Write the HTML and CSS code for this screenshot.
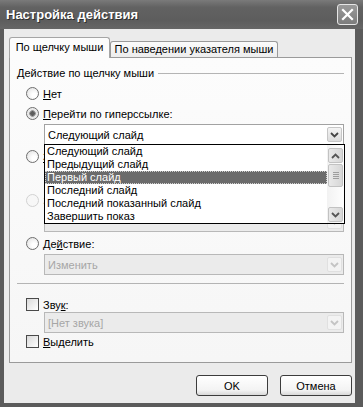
FILE: index.html
```html
<!DOCTYPE html>
<html lang="ru">
<head>
    <meta charset="UTF-8">
    <title>Настройка действия</title>
    <link rel="stylesheet" href="styles.css">
</head>
<body>
    <div class="window">
        <div class="titlebar">
            <span class="title">Настройка действия</span>
            <span class="close">
                <svg width="13" height="13" viewBox="0 0 13 13"><path d="M2 2 L11 11 M11 2 L2 11" stroke="#fff" stroke-width="2.2" stroke-linecap="square"/></svg>
            </span>
        </div>
        <div class="frame">
            <div class="tabs">
                <div class="tab active">По щелчку мыши</div>
                <div class="tab">По наведении указателя мыши</div>
            </div>
            <div class="panel">
                <div class="group-head"><span>Действие по щелчку мыши</span></div>

                <div class="opt"><span class="radio"></span><span><u>Н</u>ет</span></div>
                <div class="opt"><span class="radio checked"></span><span><u>П</u>ерейти по гиперссылке:</span></div>
                <div class="combo-wrap">
                    <div class="combo">
                        <span>Следующий слайд</span>
                        <span class="drop-btn"><svg width="9" height="6" viewBox="0 0 9 6"><path d="M1 1 L4.5 4.5 L8 1" fill="none" stroke="#444" stroke-width="1.8"/></svg></span>
                    </div>
                    <div class="listbox">
                        <ul class="items">
                            <li>Следующий слайд</li>
                            <li>Предыдущий слайд</li>
                            <li class="selected">Первый слайд</li>
                            <li>Последний слайд</li>
                            <li>Последний показанный слайд</li>
                            <li>Завершить показ</li>
                        </ul>
                        <div class="scrollbar">
                            <span class="sb-btn"><svg width="9" height="6" viewBox="0 0 9 6"><path d="M1 5 L4.5 1.5 L8 5" fill="none" stroke="#555" stroke-width="1.8"/></svg></span>
                            <span class="sb-thumb"><i></i><i></i><i></i><i></i></span>
                            <span class="sb-track"></span>
                            <span class="sb-btn"><svg width="9" height="6" viewBox="0 0 9 6"><path d="M1 1 L4.5 4.5 L8 1" fill="none" stroke="#555" stroke-width="1.8"/></svg></span>
                        </div>
                    </div>
                </div>

                <div class="opt row3"><span class="radio"></span><span><u>З</u>апуск программы:</span></div>
                <div class="combo field"></div>

                <div class="opt row4 disabled"><span class="radio"></span><span>Запуск макроса:</span></div>
                <div class="combo disabled">
                    <span></span>
                    <span class="drop-btn"><svg width="9" height="6" viewBox="0 0 9 6"><path d="M1 1 L4.5 4.5 L8 1" fill="none" stroke="#c4c4c4" stroke-width="1.8"/></svg></span>
                </div>

                <div class="opt row5"><span class="radio"></span><span>Де<u>й</u>ствие:</span></div>
                <div class="combo disabled">
                    <span>Изменить</span>
                    <span class="drop-btn"><svg width="9" height="6" viewBox="0 0 9 6"><path d="M1 1 L4.5 4.5 L8 1" fill="none" stroke="#c4c4c4" stroke-width="1.8"/></svg></span>
                </div>

                <div class="sep"></div>

                <div class="opt check-sound"><span class="checkbox"></span><span>Зву<u>к</u>:</span></div>
                <div class="combo disabled sound">
                    <span>[Нет звука]</span>
                    <span class="drop-btn"><svg width="9" height="6" viewBox="0 0 9 6"><path d="M1 1 L4.5 4.5 L8 1" fill="none" stroke="#c4c4c4" stroke-width="1.8"/></svg></span>
                </div>
                <div class="opt check-hl"><span class="checkbox"></span><span><u>В</u>ыделить</span></div>
            </div>
            <div class="buttons">
                <button>OK</button>
                <button>Отмена</button>
            </div>
        </div>
    </div>
</body>
</html>
```

FILE: styles.css
```css
body {
    margin: 0;
    font-family: "Liberation Sans", Tahoma, sans-serif;
    font-size: 11px;
    color: #000;
}
.window {
    width: 363px;
    height: 407px;
    background: #5b5b5b;
    display: flex;
    flex-direction: column;
}
.titlebar {
    height: 29px;
    flex: none;
    display: flex;
    align-items: center;
    justify-content: space-between;
    padding: 0 5px 0 6px;
    background: linear-gradient(#7a7a7a, #626262 25%, #5d5d5d 70%, #666);
    color: #fff;
}
.title {
    font-weight: bold;
    font-size: 13px;
    text-shadow: 1px 1px 0 #2e2e2e;
}
.close {
    width: 19px;
    height: 19px;
    border: 1px solid #e6e6e6;
    border-radius: 3px;
    background: linear-gradient(#9a9a9a, #7c7c7c);
    display: flex;
    align-items: center;
    justify-content: center;
}
.frame {
    flex: 1;
    margin: 0 8px 4px 4px;
    background: #ebebeb;
    display: flex;
    flex-direction: column;
}
.tabs {
    display: flex;
    align-items: flex-end;
    margin: 8px 0 0 5px;
    position: relative;
    z-index: 1;
}
.tab {
    box-sizing: border-box;
    height: 16px;
    width: 168px;
    margin-bottom: 0;
    border: 1px solid #9a9a9a;
    border-bottom: none;
    border-radius: 3px 3px 0 0;
    background: linear-gradient(#fbfbfb, #ededed);
    line-height: 15px;
    text-align: center;
}
.tab.active {
    height: 21px;
    width: 101px;
    margin-bottom: -1px;
    background: #fcfcfc;
    border-color: #a5a5a5;
    line-height: 19px;
}
.panel {
    box-sizing: border-box;
    height: 306px;
    margin: 0 3px 0 5px;
    padding: 9px 7px 0 7px;
    border: 1px solid #9a9a9a;
    background: linear-gradient(#fcfcfc, #f6f6f6);
}
.group-head {
    display: flex;
    align-items: center;
    gap: 4px;
    height: 13px;
    line-height: 13px;
}
.group-head::after {
    content: "";
    flex: 1;
    height: 1px;
    background: #b4b4b4;
}
.opt {
    display: flex;
    align-items: center;
    gap: 4px;
    height: 15px;
    margin: 6px 0 0 9px;
}
.opt + .opt {
    margin-top: 5px;
}
.radio {
    box-sizing: border-box;
    width: 13px;
    height: 13px;
    border: 1px solid #6e6e6e;
    border-radius: 50%;
    background: radial-gradient(circle at 65% 65%, #fff 20%, #dedede);
}
.radio.checked {
    background: radial-gradient(circle, #5e5e5e 0 2px, #9c9c9c 2.5px 3px, #e6e6e6 3.6px, #fafafa);
}
.checkbox {
    box-sizing: border-box;
    width: 13px;
    height: 13px;
    border: 1px solid #4a4a4a;
    background: linear-gradient(135deg, #d9d9d9, #fff);
}
.opt.disabled {
    color: #b4b4b4;
}
.opt.disabled .radio {
    border-color: #d2d2d2;
    background: #f7f7f7;
}
.combo-wrap {
    position: relative;
    margin-top: 3px;
    z-index: 2;
}
.combo {
    box-sizing: border-box;
    display: flex;
    align-items: center;
    justify-content: space-between;
    width: 300px;
    height: 21px;
    margin-left: 27px;
    padding-left: 3px;
    border: 1px solid #a2a2a2;
    background: #fff;
}
.combo-wrap .combo {
    margin-top: 0;
    height: 21px;
}
.drop-btn {
    box-sizing: border-box;
    width: 15px;
    height: 15px;
    margin-right: 1px;
    border: 1px solid #c6c6c6;
    border-radius: 2px;
    background: linear-gradient(#f4f4f4, #dcdcdc);
    display: flex;
    align-items: center;
    justify-content: center;
}
.combo.disabled {
    background: #ebebeb;
    border-color: #b8b8b8;
    color: #a6a6a6;
    margin-top: 3px;
}
.combo.disabled .drop-btn {
    border-color: #e0e0e0;
    background: #f3f3f3;
}
.combo.field {
    margin-top: 3px;
}
.row3 { margin-top: 4px; }
.row4 { margin-top: 5px; }
.row5 { margin-top: 4px; }
.listbox {
    position: absolute;
    top: 20px;
    left: 27px;
    box-sizing: border-box;
    width: 301px;
    height: 80px;
    border: 1px solid #000;
    background: #fff;
    display: flex;
}
.items {
    list-style: none;
    margin: 0;
    padding: 0;
    flex: 1;
}
.items li {
    height: 13px;
    line-height: 13px;
    padding-left: 2px;
    white-space: nowrap;
}
.items li.selected {
    background: #6b6b6b;
    color: #fff;
    outline: 1px dotted #d0d0d0;
    outline-offset: -1px;
}
.scrollbar {
    width: 17px;
    display: flex;
    flex-direction: column;
    align-items: center;
    padding: 3px 0 1px;
    box-sizing: border-box;
    background: linear-gradient(90deg, #f2f2f2, #fefefe);
}
.sb-btn, .sb-thumb {
    box-sizing: border-box;
    width: 15px;
    border: 1px solid #c2c2c2;
    border-radius: 2px;
    background: linear-gradient(90deg, #e9e9e9, #d7d7d7);
    display: flex;
    align-items: center;
    justify-content: center;
}
.sb-btn {
    height: 15px;
}
.sb-thumb {
    height: 23px;
    margin-top: 1px;
    flex-direction: column;
    gap: 1px;
}
.sb-thumb i {
    width: 6px;
    height: 1px;
    background: #9e9e9e;
}
.sb-track {
    flex: 1;
}
.sep {
    height: 1px;
    margin-top: 8px;
    background: #b4b4b4;
}
.check-sound {
    margin-top: 13px;
}
.combo.sound {
    margin-top: 0;
}
.check-hl {
    margin-top: 1px;
}
.buttons {
    display: flex;
    justify-content: flex-end;
    gap: 12px;
    margin: 12px 3px 0 0;
}
.buttons button {
    width: 72px;
    height: 21px;
    border: 1px solid #3c3c3c;
    border-radius: 3px;
    background: linear-gradient(#fff, #f3f3f3 75%, #d9d9d9);
    font-family: "Liberation Sans", Tahoma, sans-serif;
    font-size: 11px;
    color: #000;
    padding: 0;
}
```
